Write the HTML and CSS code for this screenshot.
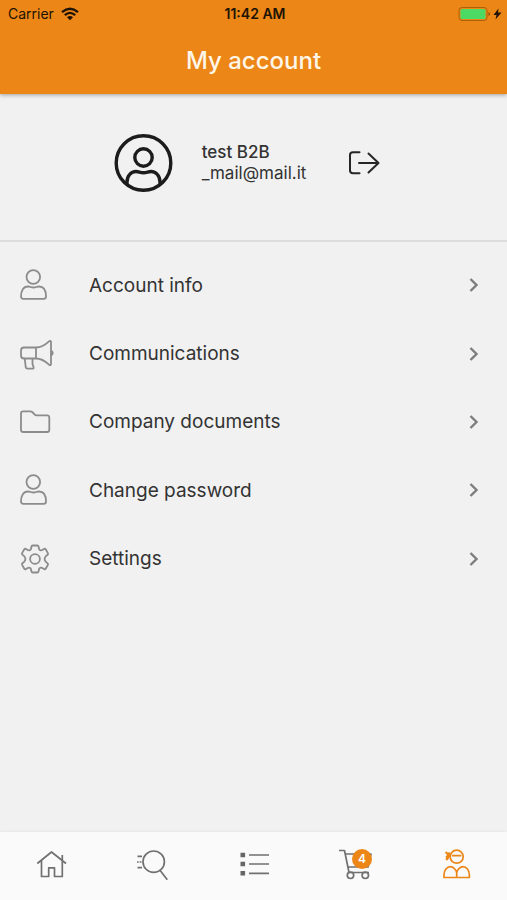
FILE: index.html
```html
<!DOCTYPE html>
<html lang="en">
<head>
<meta charset="utf-8">
<meta name="viewport" content="width=device-width, initial-scale=1">
<title>My account</title>
<link rel="stylesheet" href="styles.css">
</head>
<body>
<header class="top">
  <div class="status">
    <div class="status-left">
      <span>Carrier</span>
      <svg class="wifi" width="18" height="14" viewBox="0 0 18 14" fill="none" stroke="currentColor" stroke-width="2.3" aria-hidden="true"><path d="M1 5.2Q9-1.6 17 5.2M3.8 8.2Q9 3.6 14.2 8.2"/><path d="M6 10.3Q9 7.6 12 10.3L9 13.3Z" fill="currentColor" stroke="none"/></svg>
    </div>
    <time class="clock">11:42 AM</time>
    <div class="status-right">
      <svg width="44" height="16" viewBox="0 0 44 16" aria-hidden="true"><rect x="1" y="1.5" width="28" height="13" rx="3" fill="none" stroke="#ac6208"/><rect x="2.5" y="3" width="25" height="10" rx="1.5" fill="#4cd964"/><path d="M30.5 6v4q1.600-.5 1.600-2t-1.600-2z" fill="#8d5006"/><path d="M40.500 2.500L35.500 9h3L37.500 13.500l6-7h-3.500z" fill="#201204"/></svg>
    </div>
  </div>
  <h1 class="title">My account</h1>
</header>
<main class="content">
  <section class="profile">
    <svg class="avatar" width="60" height="60" viewBox="0 0 60 60" fill="none" stroke="#1c1c1c" stroke-width="3.400" aria-hidden="true"><circle cx="30.500" cy="30" r="27.300"/><circle cx="30.500" cy="24.500" r="8.700"/><path d="M14 51.500V49c0-6 4-10.500 9-10.500 3 0 4 1.300 7.500 1.300s4.500-1.300 7.500-1.300c5 0 9 4.500 9 10.500v2.500"/></svg>
    <div class="person">
      <strong class="name">test B2B</strong>
      <span class="mail">_mail@mail.it</span>
    </div>
    <button class="logout" type="button" aria-label="Log out">
      <svg width="32" height="26" viewBox="0 0 32 26" fill="none" stroke="#262626" stroke-width="2" stroke-linecap="round" stroke-linejoin="round" aria-hidden="true"><path d="M11.500 2.300H5Q2 2.300 2 5v15.500q0 2.700 3 2.700h6.500M11 13h19.500M20.500 3.500L30.500 13l-10 9.500"/></svg>
    </button>
  </section>
  <nav aria-label="Account">
    <ul class="menu">
      <li><a class="row" href="#info">
        <svg class="icon" viewBox="0 0 36 36" aria-hidden="true"><circle cx="14.300" cy="10" r="6.800"/><path d="M2 29.500c0-6 2.500-10 7-10 2.300 0 3 1 5.500 1s3.200-1 5.500-1c4.500 0 7 4 7 10q0 2.300-2.300 2.300H4.300Q2 31.800 2 29.500Z"/></svg>
        <span>Account info</span><svg class="chevron" viewBox="0 0 10 16" aria-hidden="true"><path d="M1.500 2l6 6-6 6"/></svg></a></li>
      <li><a class="row" href="#communications">
        <svg class="icon" viewBox="0 0 36 36" aria-hidden="true"><path d="M17 11.500H5q-3 0-3 3v5q0 3 3 3h12M17 11.500v11c5 0 9 2.500 13 6.200q2 1.300 2-.7V6q0-2-2-.7c-4 3.700-8 6.200-13 6.200ZM32 14.500q3.500 2.500 0 5M5.700 22.500l1 8.500q.3 1.700 1.700 1.700h5q1.500 0 1.200-1.500l-.6-1.700q-.5-1-.5-2V22.500"/></svg>
        <span>Communications</span><svg class="chevron" viewBox="0 0 10 16" aria-hidden="true"><path d="M1.500 2l6 6-6 6"/></svg></a></li>
      <li><a class="row" href="#documents">
        <svg class="icon" viewBox="0 0 36 36" aria-hidden="true"><path d="M2 9.500Q2 7.300 4 7.300h7.500q1 0 1.700.7l2.600 2.700q.6.600 1.600.6H28q2.300 0 2.300 2.200V26q0 2-2.300 2H4.200Q2 28 2 26Z"/></svg>
        <span>Company documents</span><svg class="chevron" viewBox="0 0 10 16" aria-hidden="true"><path d="M1.500 2l6 6-6 6"/></svg></a></li>
      <li><a class="row" href="#password">
        <svg class="icon" viewBox="0 0 36 36" aria-hidden="true"><circle cx="14.300" cy="10" r="6.800"/><path d="M2 29.500c0-6 2.500-10 7-10 2.300 0 3 1 5.500 1s3.200-1 5.500-1c4.500 0 7 4 7 10q0 2.300-2.300 2.300H4.300Q2 31.800 2 29.500Z"/></svg>
        <span>Change password</span><svg class="chevron" viewBox="0 0 10 16" aria-hidden="true"><path d="M1.500 2l6 6-6 6"/></svg></a></li>
      <li><a class="row" href="#settings">
        <svg class="icon" viewBox="0 0 36 36" aria-hidden="true"><circle cx="16" cy="18" r="4.900"/><path d="M12.500 5.500q.2-1 1.200-1h4.600q1 0 1.200 1l.5 2.300q.2 1 1.200 1.400 1 .5 2-.1l1.900-1.200q1-.5 1.600.4l2.200 3.800q.5.900-.3 1.600l-1.700 1.500q-1.300 1.300-1.300 2.800t1.300 2.800l1.700 1.500q.8.700.3 1.600l-2.200 3.800q-.6.900-1.600.4l-1.900-1.200q-1-.6-2-.1-1 .4-1.200 1.400l-.5 2.300q-.2 1-1.200 1h-4.600q-1 0-1.200-1l-.5-2.300q-.2-1-1.200-1.400-1-.5-2 .1l-1.900 1.200q-1 .5-1.600-.4l-2.200-3.800q-.5-.9.300-1.600l1.700-1.500q1.300-1.300 1.300-2.800t-1.300-2.800l-1.700-1.500q-.8-.7-.3-1.600l2.200-3.800q.6-.9 1.600-.4l1.900 1.200q1 .6 2 .1 1-.4 1.200-1.400Z"/></svg>
        <span>Settings</span><svg class="chevron" viewBox="0 0 10 16" aria-hidden="true"><path d="M1.500 2l6 6-6 6"/></svg></a></li>
    </ul>
  </nav>
</main>
<nav class="tabs" aria-label="Main">
  <a class="tab" href="#home" aria-label="Home"><svg viewBox="0 0 40 40" aria-hidden="true"><path d="M6.300 17.500L20.500 6 35 17.500M10.500 14.500v16h7.200v-8.700h5.800v8.700h7.800V9"/></svg></a>
  <a class="tab" href="#search" aria-label="Search"><svg viewBox="0 0 40 40" aria-hidden="true"><circle cx="21.700" cy="15.700" r="10.700"/><path d="M28 24.300l7.300 9.400M5.500 10.300H10M5 16h1.700M7.700 16H9.500M5.500 21.700H10"/></svg></a>
  <a class="tab" href="#list" aria-label="List"><svg viewBox="0 0 40 40" aria-hidden="true"><path d="M16 9h20M16 18h20M16 27.300h20"/><path d="M7.500 6.700h4.600v4.600H7.500zM7.500 15.700h4.600v4.600H7.500zM7.500 25h4.600v4.600H7.500z" fill="#666" stroke="none"/></svg></a>
  <a class="tab" href="#cart" aria-label="Cart, 4 items"><span class="cart"><svg viewBox="0 0 40 40" aria-hidden="true"><path d="M4 4.500h5.500L14 26.500h20M10.300 8H36l-3 13H12.800"/><circle cx="15.500" cy="29.300" r="3.200"/><circle cx="30.300" cy="29.300" r="3.200"/></svg><span class="badge">4</span></span></a>
  <a class="tab active" href="#account" aria-label="My account" aria-current="page"><svg viewBox="0 0 40 40" aria-hidden="true"><circle cx="20.700" cy="10.700" r="6.500"/><path d="M16 9.700h9.400M8 31.500V29c0-5 3-8.300 6.500-8.300 2.200 0 6.200 3 6.200 6.300 0-3.300 4-6.300 6.200-6.300 3.500 0 6.500 3.300 6.500 8.300v2.500ZM20.700 27v4.500"/><path d="M9.700 6l4.600 4.700M13.700 6.500l-2.400 3.800M13.500 9.500l-3.300 4.500M10.500 10l1.200 3.500" stroke-width="2.200"/></svg></a>
</nav>
</body>
</html>
```
FILE: styles.css
```css
* {
  box-sizing: border-box;
}

body {
  margin: 0;
  min-height: 100vh;
  display: flex;
  flex-direction: column;
  background: #f1f1f1;
  color: #333;
  font-family: Inter, "Liberation Sans", sans-serif;
}

a {
  color: inherit;
  text-decoration: none;
}

svg {
  display: block;
  flex: none;
}

.top {
  background: #eb8617;
  box-shadow: 0 1px 4px rgba(0, 0, 0, 0.35);
}

.status {
  display: grid;
  grid-template-columns: 1fr auto 1fr;
  align-items: center;
  height: 27px;
  padding: 0 5px 0 8px;
  color: #201204;
  font-size: 14px;
}

.status-left {
  display: flex;
  align-items: center;
  gap: 7px;
}

.status-right {
  display: flex;
  justify-content: flex-end;
}

.clock {
  font-weight: 600;
}

.title {
  margin: 0;
  color: #fff6e8;
  font-size: 24px;
  font-weight: 500;
  line-height: 67px;
  text-align: center;
}

.content {
  flex: 1;
}

.profile {
  display: flex;
  justify-content: center;
  align-items: center;
  height: 148px;
  padding: 0 14px 9px 0;
  border-bottom: 2px solid #dcdcdc;
}

.person {
  display: flex;
  flex-direction: column;
  margin: 0 42px 0 29px;
  font-size: 17px;
  line-height: 21px;
}

.name {
  font-weight: 500;
}

.logout {
  padding: 0;
  border: 0;
  background: none;
}

.menu {
  display: grid;
  grid-template-rows: repeat(5, 1fr);
  height: 342px;
  margin: 9px 0 0;
  padding: 0;
  list-style: none;
}

.row {
  display: flex;
  align-items: center;
  height: 100%;
  padding: 0 28px 0 19px;
  font-size: 19px;
}

.icon {
  width: 36px;
  height: 36px;
  margin-right: 34px;
  fill: none;
  stroke: #8c8c8c;
  stroke-width: 1.8;
  stroke-linejoin: round;
}

.chevron {
  width: 10px;
  height: 16px;
  margin-left: auto;
  fill: none;
  stroke: #7d7d7d;
  stroke-width: 2.4;
}

.tabs {
  display: grid;
  grid-template-columns: repeat(5, 1fr);
  height: 68px;
  background: #fafafa;
  box-shadow: 0 0 3px rgba(0, 0, 0, 0.08);
}

.tab {
  display: flex;
  justify-content: center;
  align-items: center;
  color: #707070;
}

.tab svg {
  width: 40px;
  height: 40px;
  fill: none;
  stroke: currentColor;
  stroke-width: 1.7;
  stroke-linejoin: round;
}

.tab.active {
  color: #eb8617;
}

.cart {
  position: relative;
}

.badge {
  position: absolute;
  top: 3px;
  left: 17px;
  width: 20px;
  height: 20px;
  border-radius: 50%;
  background: #eb8617;
  color: #fff;
  font-size: 12px;
  font-weight: 600;
  line-height: 20px;
  text-align: center;
}
```
